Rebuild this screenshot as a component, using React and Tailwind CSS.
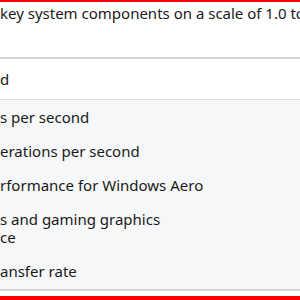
export default function App() {
  const f = { fontFamily: '"Noto Sans", "Open Sans", sans-serif' };
  return (
    <div className="w-[300px] h-[300px] overflow-hidden bg-white flex flex-col text-[15px] text-[#1a1a1a]" style={f}>
      <div className="h-[2px] bg-[#ff0000] shrink-0" />
      <div className="h-[22px] leading-[22px] whitespace-nowrap shrink-0">key system components on a scale of 1.0 to</div>
      <div className="h-[33px] shrink-0" />
      <div className="h-[2px] shrink-0 bg-[#d4d4d4]" />
      <div className="h-[40px] shrink-0 flex items-center whitespace-nowrap">d</div>
      <div className="h-[1px] shrink-0 bg-[#dcdcdc]" />
      <div className="flex-1 bg-[#f6f7f8] flex flex-col leading-[18px] whitespace-nowrap">
        <div className="h-[34px] flex items-center">s per second</div>
        <div className="h-[34px] flex items-center">erations per second</div>
        <div className="h-[34px] flex items-center">rformance for Windows Aero</div>
        <div className="h-[51px] flex flex-col justify-center">
          <div>s and gaming graphics</div>
          <div>ce</div>
        </div>
        <div className="h-[35px] flex items-center">ansfer rate</div>
      </div>
      <div className="h-[2px] shrink-0 bg-[#d4d4d4]" />
      <div className="h-[5px] shrink-0 bg-white" />
      <div className="h-[4px] shrink-0 bg-[#ff0000]" />
    </div>
  );
}
